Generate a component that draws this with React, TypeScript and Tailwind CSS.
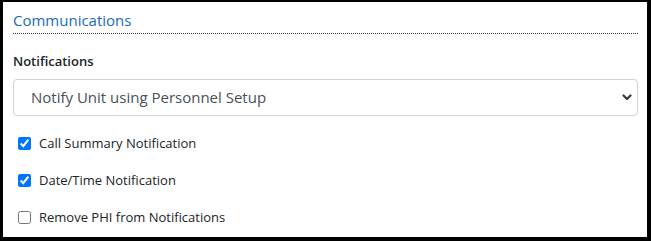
import { useState } from "react";

const font = "font-['Segoe_UI','Open_Sans','Noto_Sans',sans-serif]";

function CheckRow({ label, initial }: { label: string; initial: boolean }) {
  const [checked, setChecked] = useState(initial);
  return (
    <label className="flex h-[37px] items-center gap-[8px] pl-[5px]">
      <input
        checked={checked}
        className="h-[13px] w-[13px] accent-[#0075ff]"
        onChange={() => setChecked((v) => !v)}
        type="checkbox"
      />
      <span className="text-[13px] text-[#212529]">{label}</span>
    </label>
  );
}

export default function App() {
  return (
    <div className={`h-[241px] w-[651px] bg-black pb-[4px] pl-[3px] pr-[4px] pt-[2px] ${font}`}>
      <div className="h-full bg-white pl-[10px] pr-[9px]">
        <div className="flex h-[31px] items-end pb-[3px]">
          <h2 className="text-[15px] leading-[20px] text-[#1a6bb5]">Communications</h2>
        </div>
        <div className="border-b border-dotted border-[#333]" />
        <div className="pt-[18px] text-[13px] font-semibold leading-[18px] text-[#212529]">
          Notifications
        </div>
        <div className="relative mt-[9px]">
          <select
            className="h-[37px] w-full appearance-none rounded-[4px] border border-[#ced4da] bg-white pl-[17px] pr-8 text-[15px] text-[#495057] outline-none"
            defaultValue="personnel"
          >
            <option value="personnel">Notify Unit using Personnel Setup</option>
          </select>
          <svg
            className="pointer-events-none absolute right-[6px] top-[15px]"
            height="7"
            viewBox="0 0 10 7"
            width="10"
          >
            <path
              d="M1.5 1.5l3.5 3.5 3.5-3.5"
              fill="none"
              stroke="#343a40"
              strokeLinecap="round"
              strokeLinejoin="round"
              strokeWidth="2.2"
            />
          </svg>
        </div>
        <div className="mt-[9px]">
          <CheckRow initial label="Call Summary Notification" />
          <CheckRow initial label="Date/Time Notification" />
          <CheckRow initial={false} label="Remove PHI from Notifications" />
        </div>
      </div>
    </div>
  );
}
